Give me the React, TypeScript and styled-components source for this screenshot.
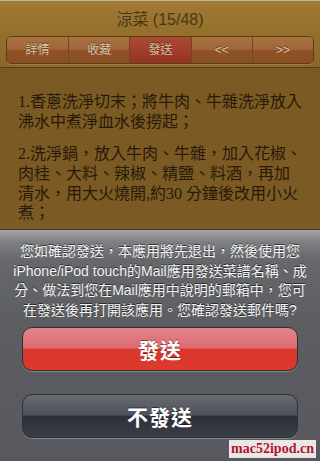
import styled, { createGlobalStyle } from "styled-components";

const GlobalStyle = createGlobalStyle`
  html, body {
    margin: 0;
    padding: 0;
    background: #000;
  }
  body {
    width: 320px;
    height: 461px;
    overflow: hidden;
    font-family: "Liberation Sans", "Noto Sans CJK TC", sans-serif;
  }
`;

const Screen = styled.div`
  position: relative;
  width: 320px;
  height: 461px;
  display: flex;
  flex-direction: column;
  overflow: hidden;
`;

const Header = styled.header`
  flex: none;
  height: 68px;
  box-sizing: border-box;
  border-top: 1px solid #b8b2a6;
  border-bottom: 1px solid #5a3e12;
  background: linear-gradient(#a27b33 0%, #95702d 45%, #8c6828 100%);
  display: flex;
  flex-direction: column;
  padding: 0 6px;
`;

const Title = styled.h1`
  margin: 0;
  height: 35px;
  line-height: 38px;
  text-align: center;
  font-size: 16px;
  font-weight: normal;
  color: #4a3517;
  font-family: "Liberation Sans", "Noto Sans CJK TC", sans-serif;
`;

const Segmented = styled.nav`
  display: grid;
  grid-template-columns: repeat(5, 1fr);
  height: 28px;
  box-sizing: border-box;
  border: 1px solid #5e3d14;
  border-radius: 5px;
  overflow: hidden;
  box-shadow: 0 1px 0 rgba(200, 160, 90, 0.35);
`;

const Segment = styled.button<{ $active?: boolean }>`
  border: none;
  border-left: 1px solid #74481c;
  &:first-child {
    border-left: none;
  }
  margin: 0;
  padding: 0;
  background: ${({ $active }) =>
    $active
      ? "linear-gradient(#ab4a32 0%, #a23f2b 50%, #93331f 100%)"
      : "linear-gradient(#a9703e 0%, #a0663a 48%, #8e5226 52%, #8a5024 100%)"};
  color: #d6c6ae;
  font-size: 12px;
  font-family: "Liberation Sans", "Noto Sans CJK TC", sans-serif;
  text-shadow: 0 -1px 0 rgba(60, 30, 5, 0.6);
  line-height: 26px;
`;

const Content = styled.main`
  flex: 1;
  min-height: 0;
  overflow: hidden;
  background: #7b5a24;
  padding: 24px 10px 0 18px;
  color: #271a08;
  font-family: "Liberation Serif", "Noto Sans CJK TC", serif;
  font-size: 16px;
  line-height: 19.8px;
`;

const Para = styled.p`
  margin: 0 0 12.5px;
  white-space: nowrap;
`;

const Sheet = styled.section`
  flex: none;
  height: 232px;
  box-sizing: border-box;
  border-top: 1px solid #3c3c3e;
  background: linear-gradient(
    #a3a5a9 0px,
    #7d7f83 12px,
    #66686c 30px,
    #5c5e62 90px,
    #57595e 232px
  );
  display: flex;
  flex-direction: column;
  align-items: center;
  padding: 12px 0 0;
`;

const Message = styled.p`
  margin: 0 0 7px;
  text-align: center;
  color: #f4f4f4;
  font-size: 14px;
  line-height: 19.5px;
  white-space: nowrap;
  font-family: "Liberation Sans", "Noto Sans CJK TC", sans-serif;
  text-shadow: 0 -1px 0 rgba(0, 0, 0, 0.55);
`;

const SheetButton = styled.button<{ $tone: "red" | "dark" }>`
  flex: none;
  width: 276px;
  height: 44px;
  margin: 0;
  border: 1px solid #2e2f33;
  border-radius: 10px;
  color: #fff;
  font-size: 21px;
  font-weight: bold;
  font-family: "Liberation Sans", "Noto Sans CJK TC", sans-serif;
  letter-spacing: 1px;
  text-shadow: 0 -1px 0 rgba(0, 0, 0, 0.45);
  box-shadow: 0 1px 0 rgba(170, 172, 178, 0.55);
  background: ${({ $tone }) =>
    $tone === "red"
      ? "linear-gradient(#e4858b 0%, #dc6a70 48%, #d9362c 50%, #dd3a2e 100%)"
      : "linear-gradient(#686b72 0%, #4e515a 48%, #2c2f38 50%, #3b3e47 100%)"};
  & + & {
    margin-top: 23px;
  }
`;

const Watermark = styled.div`
  position: absolute;
  right: 4px;
  bottom: 3px;
  width: 87px;
  height: 18px;
  background: #ebe7e7;
  color: #b3142b;
  font-family: "Liberation Serif", serif;
  font-weight: bold;
  font-size: 14px;
  line-height: 18px;
  text-align: center;
`;

const tabs = ["詳情", "收藏", "發送", "<<", ">>"];

export default function App() {
  return (
    <Screen>
      <GlobalStyle />
      <Header>
        <Title>涼菜 (15/48)</Title>
        <Segmented>
          {tabs.map((t) => (
            <Segment key={t} $active={t === "發送"}>
              {t}
            </Segment>
          ))}
        </Segmented>
      </Header>
      <Content>
        <Para>
          1.香蔥洗淨切末；將牛肉、牛雜洗淨放入
          <br />
          沸水中煮淨血水後撈起；
        </Para>
        <Para>
          2.洗淨鍋，放入牛肉、牛雜，加入花椒、
          <br />
          肉桂、大料、辣椒、精鹽、料酒，再加
          <br />
          清水，用大火燒開,約30 分鐘後改用小火
          <br />
          煮；
        </Para>
      </Content>
      <Sheet>
        <Message>
          您如確認發送，本應用將先退出，然後使用您
          <br />
          iPhone/iPod touch的Mail應用發送菜譜名稱、成
          <br />
          分、做法到您在Mail應用中說明的郵箱中，您可
          <br />
          在發送後再打開該應用。您確認發送郵件嗎?
        </Message>
        <SheetButton $tone="red">發送</SheetButton>
        <SheetButton $tone="dark">不發送</SheetButton>
      </Sheet>
      <Watermark>mac52ipod.cn</Watermark>
    </Screen>
  );
}
